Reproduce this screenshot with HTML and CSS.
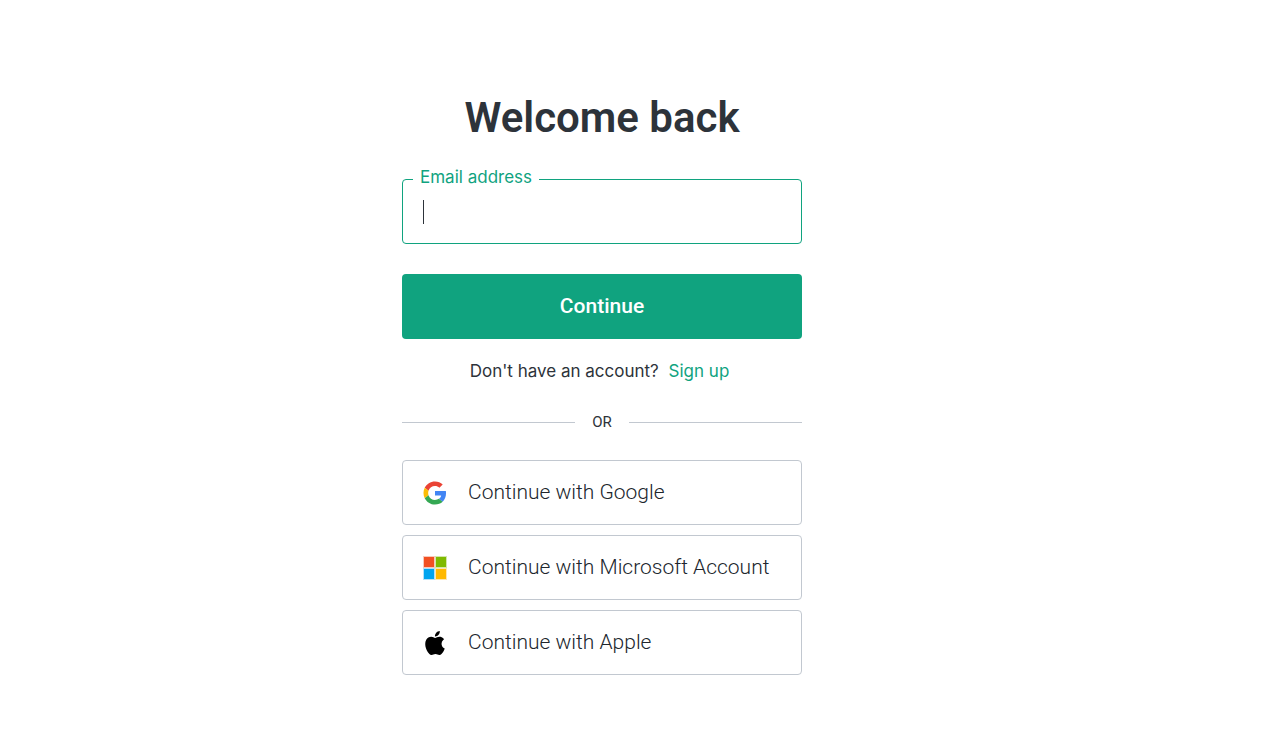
FILE: index.html
```html
<!DOCTYPE html>
<html lang="en">
<head>
  <meta charset="UTF-8">
  <meta name="viewport" content="width=device-width, initial-scale=1.0">
  <title>Welcome back</title>
  <link rel="stylesheet" href="styles.css">
</head>
<body>
  <main class="login">
    <h1>Welcome back</h1>

    <form class="login-form">
      <div class="field">
        <label for="email">Email address</label>
        <input type="email" id="email" name="email" autocomplete="email" autofocus>
        <span class="caret"></span>
      </div>
      <button type="submit" class="continue-btn">Continue</button>
    </form>

    <p class="signup">Don't have an account? <a href="#">Sign up</a></p>

    <div class="divider"><span>OR</span></div>

    <!-- Social logins -->
    <div class="social">
      <button type="button" class="social-btn">
        <svg viewBox="-1 -1 50 50" aria-hidden="true">
          <path fill="#EA4335" d="M24 9.5c3.54 0 6.71 1.22 9.21 3.6l6.85-6.85C35.9 2.38 30.47 0 24 0 14.62 0 6.51 5.38 2.56 13.22l7.98 6.19C12.43 13.72 17.74 9.5 24 9.5z"/>
          <path fill="#4285F4" d="M46.98 24.55c0-1.57-.15-3.09-.38-4.55H24v9.02h12.94c-.58 2.96-2.26 5.48-4.78 7.18l7.73 6c4.51-4.18 7.09-10.36 7.09-17.65z"/>
          <path fill="#FBBC05" d="M10.53 28.59c-.48-1.45-.76-2.99-.76-4.59s.27-3.14.76-4.59l-7.98-6.19C.92 16.46 0 20.12 0 24c0 3.88.92 7.54 2.56 10.78l7.97-6.19z"/>
          <path fill="#34A853" d="M24 48c6.48 0 11.93-2.13 15.89-5.81l-7.73-6c-2.15 1.45-4.92 2.3-8.16 2.3-6.26 0-11.57-4.22-13.47-9.91l-7.98 6.19C6.51 42.62 14.62 48 24 48z"/>
        </svg>
        <span>Continue with Google</span>
      </button>
      <button type="button" class="social-btn">
        <svg viewBox="0 0 24 24" aria-hidden="true">
          <path fill="#f8c9bc" d="M0 0h12v12H0z"/>
          <path fill="#d3e6ac" d="M12 0h12v12H12z"/>
          <path fill="#b3dff8" d="M0 12h12v12H0z"/>
          <path fill="#fde6b0" d="M12 12h12v12H12z"/>
          <path fill="#f25022" d="M1 1h10v10H1z"/>
          <path fill="#7fba00" d="M13 1h10v10H13z"/>
          <path fill="#00a4ef" d="M1 13h10v10H1z"/>
          <path fill="#ffb900" d="M13 13h10v10H13z"/>
        </svg>
        <span>Continue with Microsoft Account</span>
      </button>
      <button type="button" class="social-btn">
        <svg viewBox="0 0 24 24" aria-hidden="true">
          <path d="M12.152 6.896c-.948 0-2.415-1.078-3.96-1.04-2.04.027-3.91 1.183-4.961 3.014-2.117 3.675-.546 9.103 1.519 12.09 1.013 1.454 2.208 3.09 3.792 3.039 1.52-.065 2.09-.987 3.935-.987 1.831 0 2.35.987 3.96.948 1.637-.026 2.676-1.48 3.676-2.948 1.156-1.688 1.636-3.325 1.662-3.415-.039-.013-3.182-1.221-3.22-4.857-.026-3.04 2.48-4.494 2.597-4.559-1.429-2.09-3.623-2.324-4.39-2.376-2-.156-3.675 1.09-4.61 1.09zM15.53 3.83c.843-1.012 1.4-2.427 1.245-3.83-1.207.052-2.662.805-3.532 1.818-.78.896-1.454 2.338-1.273 3.714 1.338.104 2.715-.688 3.559-1.701"/>
        </svg>
        <span>Continue with Apple</span>
      </button>
    </div>
  </main>
</body>
</html>
```
FILE: styles.css
```css
* {
  box-sizing: border-box;
}
body {
  margin: 0;
  padding: 93px 80px 40px 0;
  background: #fff;
  color: #2d333a;
  font-family: Roboto, 'Liberation Sans', sans-serif;
  font-size: 17px;
}
.login {
  max-width: 400px;
  margin: 0 auto;
}
h1 {
  margin: 0 0 36px;
  font-size: 42px;
  line-height: 50px;
  font-weight: 600;
  text-align: center;
}
.field {
  position: relative;
  margin-bottom: 30px;
}
/* Label sits on top of the input border */
.field label {
  position: absolute;
  top: -12px;
  left: 11px;
  padding: 0 7px;
  font-family: Inter, Roboto, sans-serif;
  line-height: 20px;
  background: #fff;
  color: #10a37f;
}
.field input {
  display: block;
  width: 100%;
  height: 65px;
  padding: 0 20px;
  border: 1px solid #10a37f;
  border-radius: 4px;
  background: #fff;
  color: inherit;
  font: inherit;
  font-size: 21px;
  caret-color: transparent;
  outline: none;
}
.caret {
  display: none;
  position: absolute;
  top: 21px;
  left: 21px;
  width: 1px;
  height: 24px;
  background: #2d333a;
}
.field input:focus + .caret {
  display: block;
}
.continue-btn {
  display: block;
  width: 100%;
  height: 65px;
  padding: 0 0 2px;
  border: none;
  border-radius: 4px;
  background: #10a37f;
  color: #fff;
  font: inherit;
  font-size: 21px;
  font-weight: 500;
  cursor: pointer;
}
.signup {
  margin: 22px 0 31px;
  font-family: Inter, Roboto, sans-serif;
  line-height: 20px;
  text-align: center;
}
.signup a {
  margin: 0 5px;
  color: #10a37f;
  text-decoration: none;
}
.divider {
  display: flex;
  align-items: center;
  margin-bottom: 28px;
  font-size: 15px;
  line-height: 20px;
}
.divider::before,
.divider::after {
  content: "";
  flex: 1;
  border-top: 1px solid #c2c8d0;
}
.divider span {
  padding: 0 17px;
}
.social {
  display: flex;
  flex-direction: column;
  gap: 10px;
}
.social-btn {
  display: flex;
  align-items: center;
  gap: 21px;
  height: 65px;
  padding: 0 20px;
  border: 1px solid #c2c8d0;
  border-radius: 4px;
  background: #fff;
  color: #20262d;
  font: inherit;
  font-size: 21px;
  font-weight: 300;
  cursor: pointer;
}
.social-btn span {
  padding-bottom: 2px;
}
.social-btn svg {
  width: 24px;
  height: 24px;
}
```
